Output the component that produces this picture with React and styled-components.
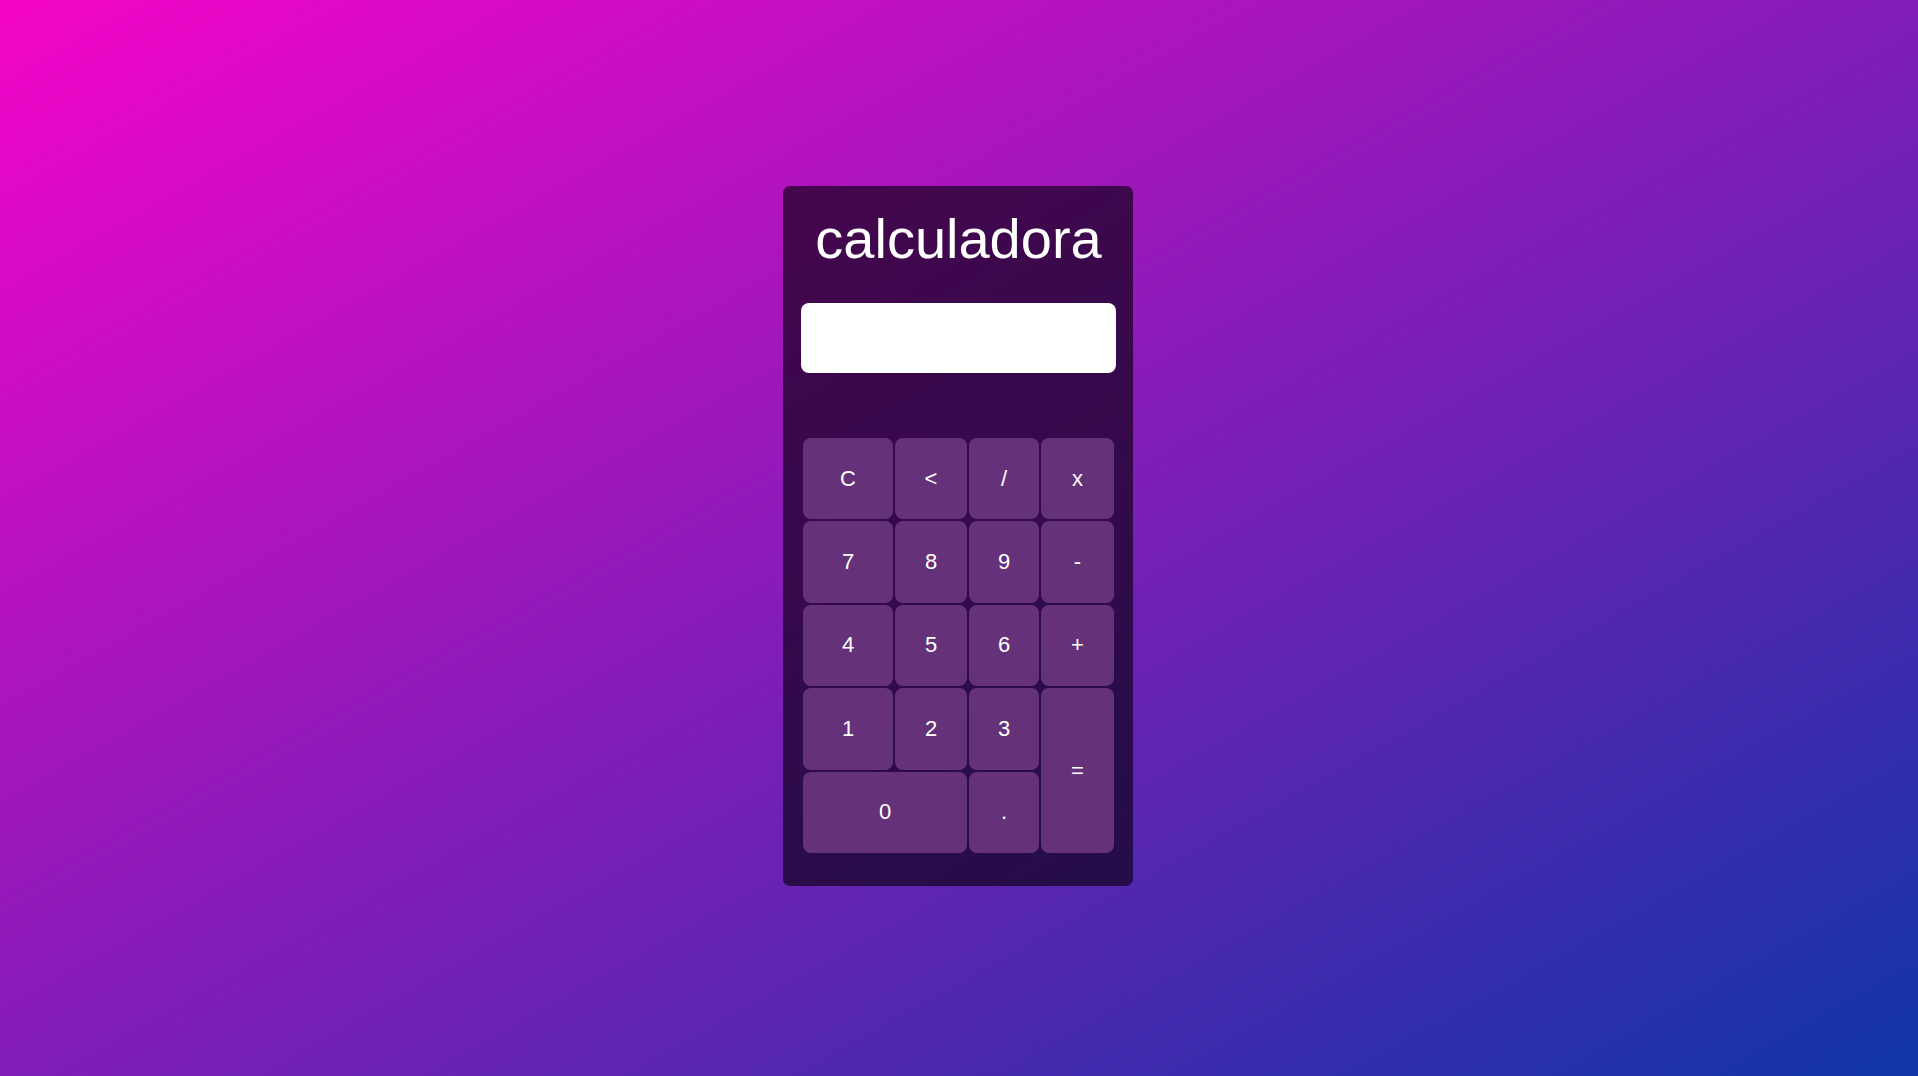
import styled, { createGlobalStyle } from "styled-components";

const GlobalStyle = createGlobalStyle`
* { box-sizing: border-box; }
html, body { margin: 0; padding: 0; }
body {
  font-family: "Liberation Sans", Arial, sans-serif;
  background: linear-gradient(to bottom right, #f505c8, #0f35a6);
  min-height: 100vh;
}
`

const Page = styled.div`
min-height: 100vh;
padding: 0 2px 4px 0;
display: flex;
align-items: center;
justify-content: center;
`

const Card = styled.div`
width: 350px;
height: 700px;
padding: 18px 17px 33px 18px;
background: rgba(12, 0, 20, 0.66);
border-radius: 7px;
display: flex;
flex-direction: column;
`

const Title = styled.h1`
margin: 2px 0 0;
font-size: 56px;
font-weight: normal;
line-height: normal;
color: #fff;
text-align: center;
`

const Display = styled.input`
margin-top: 32px;
height: 70px;
width: 100%;
border: none;
border-radius: 8px;
background: #fff;
outline: none;
font-family: inherit;
font-size: 28px;
padding: 0 14px;
text-align: right;
`

const Keys = styled.div`
margin: 65px 2px 0;
height: 416px;
display: grid;
grid-template-columns: 90px 72px 70px 73px;
grid-template-rows: repeat(5, 1fr);
gap: 2px;
`

const Key = styled.button`
border: none;
border-radius: 8px;
background: #653279;
color: #fff;
font-family: "Liberation Sans", Arial, sans-serif;
font-size: 22px;
cursor: pointer;
grid-column: ${(p) => (p.$wide ? "span 2" : "auto")};
grid-row: ${(p) => (p.$tall ? "span 2" : "auto")};
`

const keys = [
  { l: "C" }, { l: "<" }, { l: "/" }, { l: "x" },
  { l: "7" }, { l: "8" }, { l: "9" }, { l: "-" },
  { l: "4" }, { l: "5" }, { l: "6" }, { l: "+" },
  { l: "1" }, { l: "2" }, { l: "3" }, { l: "=", tall: true },
  { l: "0", wide: true }, { l: "." },
]

const App = () => {
  return (
    <Page>
      <GlobalStyle />
      <Card>
        <Title>calculadora</Title>
        <Display type="text" readOnly />
        <Keys>
          {keys.map((k) => (
            <Key key={k.l} $wide={k.wide} $tall={k.tall}>{k.l}</Key>
          ))}
        </Keys>
      </Card>
    </Page>
  )
}

export default App;
